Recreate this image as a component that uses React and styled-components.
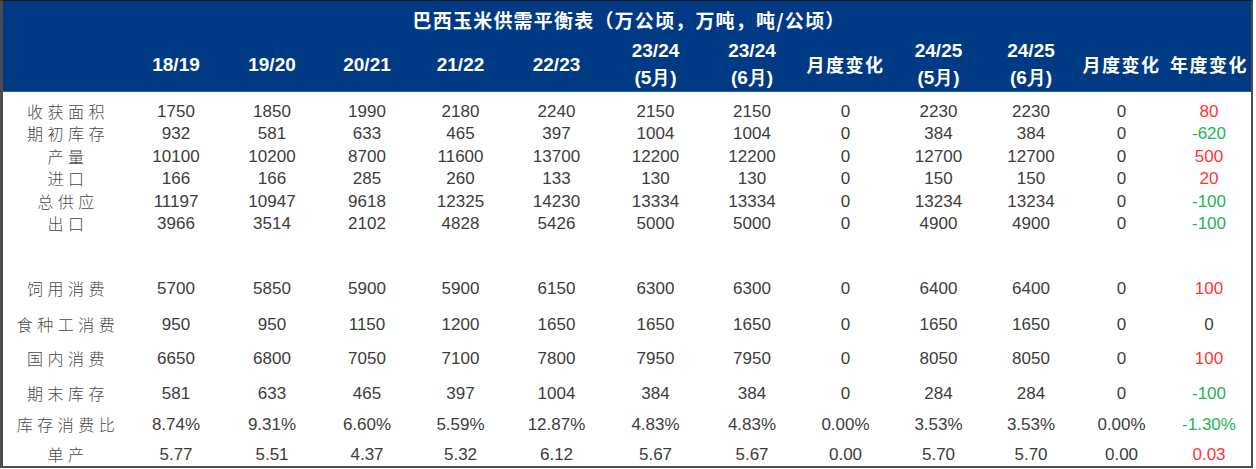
import React from 'react';
import styled, { createGlobalStyle } from 'styled-components';

const GlobalStyle = createGlobalStyle`
    body {
        margin: 0;
        background: #ffffff;
        font-family: "Liberation Sans", Arial, sans-serif;
    }
`;

const COLS = '125px 96px 96px 94px 93px 99px 99px 94px 93px 93px 92px 89px 86px';
const ROW_HEIGHTS = [31, 22, 23, 22, 23, 22, 66, 36, 34, 35, 31, 30];

const Frame = styled.div`
    width: 1253px;
    height: 468px;
    box-sizing: border-box;
    border: 2px solid #4d4d4d;
    border-top: 1px solid #1a1a1a;
    border-left-width: 3px;
    display: flex;
    flex-direction: column;
    overflow: hidden;
`;

const Header = styled.div`
    background: #003a85;
    color: #ffffff;
    border-bottom: 1px solid #2a5aa3;
    display: flex;
    flex-direction: column;
`;

const Title = styled.div`
    height: 36px;
    display: flex;
    align-items: center;
    justify-content: center;
    padding-left: 4px;
    font-family: "Noto Sans CJK SC", sans-serif;
    font-weight: 700;
    font-size: 19px;
    letter-spacing: 1.2px;
`;

const Row = styled.div`
    display: grid;
    grid-template-columns: ${COLS};
    height: ${(p) => p.$h}px;
`;

const HeadCell = styled.div`
    display: flex;
    flex-direction: column;
    align-items: center;
    justify-content: center;
    line-height: 27px;
    font-size: ${(p) => (p.$cjk ? '18px' : '19px')};
    font-weight: 700;
    letter-spacing: ${(p) => (p.$cjk ? '1.5px' : '0')};
    font-family: ${(p) => (p.$cjk ? '"Noto Sans CJK SC", sans-serif' : '"Liberation Sans", Arial, sans-serif')};
    white-space: nowrap;
    padding-bottom: 1px;
`;

const Cell = styled.div`
    display: flex;
    align-items: flex-end;
    justify-content: center;
    padding-bottom: 2px;
    font-size: 17px;
    line-height: 18px;
    color: ${(p) => p.$color || '#3d3d3d'};
    white-space: nowrap;
`;

const Label = styled(Cell)`
    font-family: "Noto Sans CJK SC", sans-serif;
    font-weight: 300;
    font-size: 16px;
    line-height: 17px;
    letter-spacing: 4.5px;
    padding-left: 5px;
    padding-bottom: 3px;
    color: #4a4a4a;
`;

const columns = [
    ['18/19'], ['19/20'], ['20/21'], ['21/22'], ['22/23'],
    ['23/24', '(5月)'], ['23/24', '(6月)'], ['月度变化'],
    ['24/25', '(5月)'], ['24/25', '(6月)'], ['月度变化'], ['年度变化'],
];

const rows = [
    ['收获面积', '1750', '1850', '1990', '2180', '2240', '2150', '2150', '0', '2230', '2230', '0', '80'],
    ['期初库存', '932', '581', '633', '465', '397', '1004', '1004', '0', '384', '384', '0', '-620'],
    ['产量', '10100', '10200', '8700', '11600', '13700', '12200', '12200', '0', '12700', '12700', '0', '500'],
    ['进口', '166', '166', '285', '260', '133', '130', '130', '0', '150', '150', '0', '20'],
    ['总供应', '11197', '10947', '9618', '12325', '14230', '13334', '13334', '0', '13234', '13234', '0', '-100'],
    ['出口', '3966', '3514', '2102', '4828', '5426', '5000', '5000', '0', '4900', '4900', '0', '-100'],
    ['饲用消费', '5700', '5850', '5900', '5900', '6150', '6300', '6300', '0', '6400', '6400', '0', '100'],
    ['食种工消费', '950', '950', '1150', '1200', '1650', '1650', '1650', '0', '1650', '1650', '0', '0'],
    ['国内消费', '6650', '6800', '7050', '7100', '7800', '7950', '7950', '0', '8050', '8050', '0', '100'],
    ['期末库存', '581', '633', '465', '397', '1004', '384', '384', '0', '284', '284', '0', '-100'],
    ['库存消费比', '8.74%', '9.31%', '6.60%', '5.59%', '12.87%', '4.83%', '4.83%', '0.00%', '3.53%', '3.53%', '0.00%', '-1.30%'],
    ['单产', '5.77', '5.51', '4.37', '5.32', '6.12', '5.67', '5.67', '0.00', '5.70', '5.70', '0.00', '0.03'],
];

function changeColor(v) {
    const n = parseFloat(v);
    if (n > 0) return '#ff3535';
    if (n < 0) return '#24b35a';
    return '#3d3d3d';
}

export default function App() {
    return (
        <>
            <GlobalStyle />
            <Frame>
                <Header>
                    <Title>巴西玉米供需平衡表（万公顷，万吨，吨/公顷）</Title>
                    <Row $h={54}>
                        <HeadCell />
                        {columns.map((lines, i) => (
                            <HeadCell key={i} $cjk={lines.length === 1 && /[月年]/.test(lines[0])}>
                                {lines.map((l) => (
                                    <span key={l}>{l}</span>
                                ))}
                            </HeadCell>
                        ))}
                    </Row>
                </Header>
                {rows.map((r, ri) => (
                    <Row key={r[0]} $h={ROW_HEIGHTS[ri]}>
                        <Label>{r[0]}</Label>
                        {r.slice(1).map((v, ci) => (
                            <Cell key={ci} $color={ci === 11 ? changeColor(v) : undefined}>
                                {v}
                            </Cell>
                        ))}
                    </Row>
                ))}
            </Frame>
        </>
    );
}
